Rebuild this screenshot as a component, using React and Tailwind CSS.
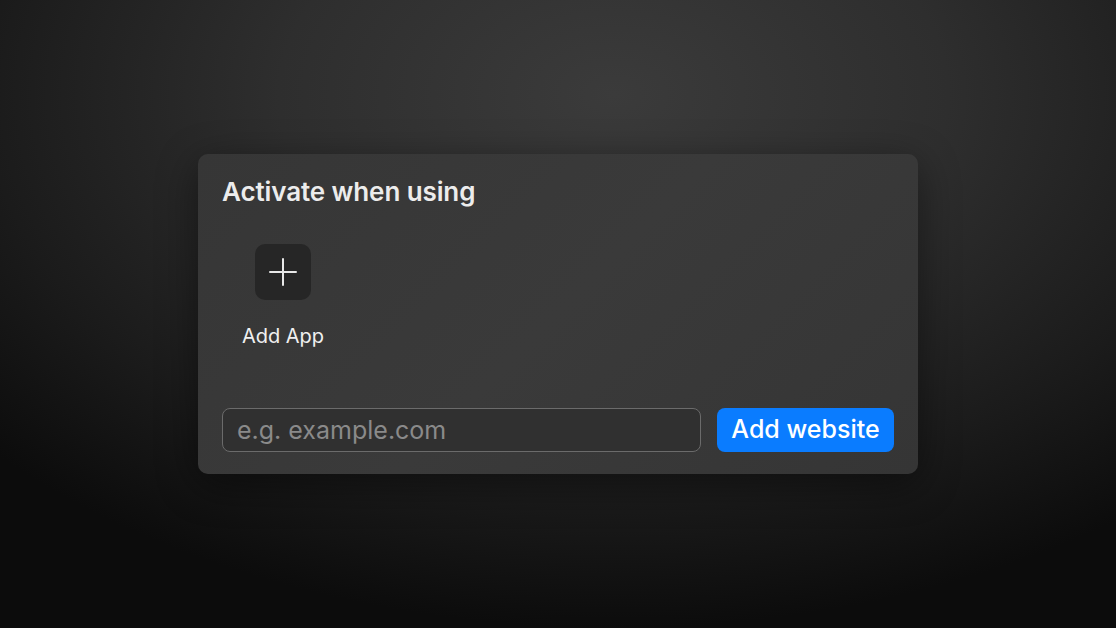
export default function App() {
  return (
    <div
      className="w-[1116px] h-[628px] flex items-start justify-center pt-[154px] bg-[radial-gradient(ellipse_75%_85%_at_55%_15%,#3b3b3b_0%,#2e2e2e_40%,#1b1b1b_75%,#0c0c0c_100%)]"
      style={{ fontFamily: 'Inter, "Noto Sans", sans-serif' }}
    >
      <div className="w-[720px] h-[320px] rounded-[10px] bg-[linear-gradient(135deg,#363636_0%,#3a3a3a_50%,#353535_100%)] shadow-[0_10px_40px_rgba(0,0,0,0.45)] flex flex-col px-6 pt-[22px] pb-[22px]">
        <h1 className="text-[26px] leading-8 font-semibold text-[#ececec] tracking-[-0.1px]">Activate when using</h1>

        {/* app list */}
        <div className="mt-[36px] flex">
          <button className="w-[122px] flex flex-col items-center">
            <span className="w-14 h-14 rounded-[10px] bg-[#262626] flex items-center justify-center">
              <svg width="28" height="28" viewBox="0 0 28 28" fill="none" stroke="#e8e8e8" strokeWidth="2" strokeLinecap="round">
                <path d="M14 1v26M1 14h26" />
              </svg>
            </span>
            <span className="mt-[22px] text-[20px] leading-7 text-[#f0f0f0]">Add App</span>
          </button>
        </div>

        <div className="mt-auto flex gap-4">
          <input
            type="text"
            placeholder="e.g. example.com"
            className="flex-1 h-11 rounded-lg border border-[#6b6b6b] bg-[#303030] px-[14px] text-[25px] text-[#e0e0e0] placeholder:text-[#8a8a8a] outline-none"
          />
          <button className="h-11 w-[177px] rounded-lg bg-[#0a7cff] text-white text-[25px] font-medium">Add website</button>
        </div>
      </div>
    </div>
  )
}
